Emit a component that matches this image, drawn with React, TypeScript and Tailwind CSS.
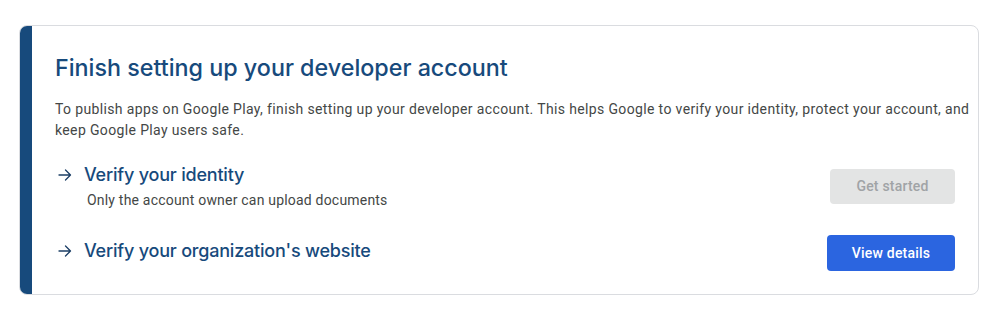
import React from 'react'

const ArrowIcon = () => (
  <svg width="14" height="14" viewBox="0 0 14 14" fill="none" className="shrink-0">
    <path d="M1 7h11.5M7.5 2 12.5 7l-5 5" stroke="#1c3f66" strokeWidth="1.3" strokeLinecap="round" strokeLinejoin="round" />
  </svg>
)

const tasks = [
  { title: 'Verify your identity', note: 'Only the account owner can upload documents', action: 'Get started', disabled: true },
  { title: "Verify your organization's website", note: '', action: 'View details', disabled: false },
]

const App = () => {
  return (
    <div className="w-[999px] h-[309px] bg-white pt-[25px] pl-[19px] pr-[20px]" style={{ fontFamily: 'Roboto, "Liberation Sans", sans-serif' }}>
      <div className="flex h-[270px] rounded-[8px] border border-[#dadce0] overflow-hidden">
        <div className="w-[12px] bg-[#174a7c] shrink-0" />
        <div className="flex-1 pl-[23px] pr-[4px] pt-[27px]">
          <h1 className="text-[23.3px] leading-[30px] font-medium text-[#174a7c]" style={{ fontFamily: 'Inter, sans-serif' }}>
            Finish setting up your developer account
          </h1>
          <p className="mt-[16px] text-[14px] leading-[21px] tracking-[0.36px] text-[#444746]">
            To publish apps on Google Play, finish setting up your developer account. This helps Google to verify your identity, protect your account, and keep Google Play users safe.
          </p>
          <div className="mt-[20px] pr-[19px] flex flex-col gap-[28px]">
            {tasks.map((t) => (
              <div key={t.title} className="flex items-start justify-between">
                <div>
                  <div className="flex items-center gap-[12px] pl-[3px]">
                    <ArrowIcon />
                    <span className="text-[18px] leading-[28px] font-medium text-[#174a7c] tracking-[-0.2px]" style={{ fontFamily: 'Inter, sans-serif' }}>
                      {t.title}
                    </span>
                  </div>
                  {t.note && <div className="pl-[32px] mt-[2px] text-[14px] leading-[18px] tracking-[0.2px] text-[#444746]">{t.note}</div>}
                </div>
                <button
                  className={
                    t.disabled
                      ? 'mt-[8px] w-[125px] h-[35px] rounded-[4px] bg-[#e3e4e4] text-[#a0a3a6] text-[14px] font-medium tracking-[0.2px]'
                      : 'mt-[-2px] w-[128px] h-[36px] rounded-[4px] bg-[#2b65e0] text-white text-[14px] font-medium tracking-[0.2px]'
                  }
                >
                  {t.action}
                </button>
              </div>
            ))}
          </div>
        </div>
      </div>
    </div>
  )
}

export default App
